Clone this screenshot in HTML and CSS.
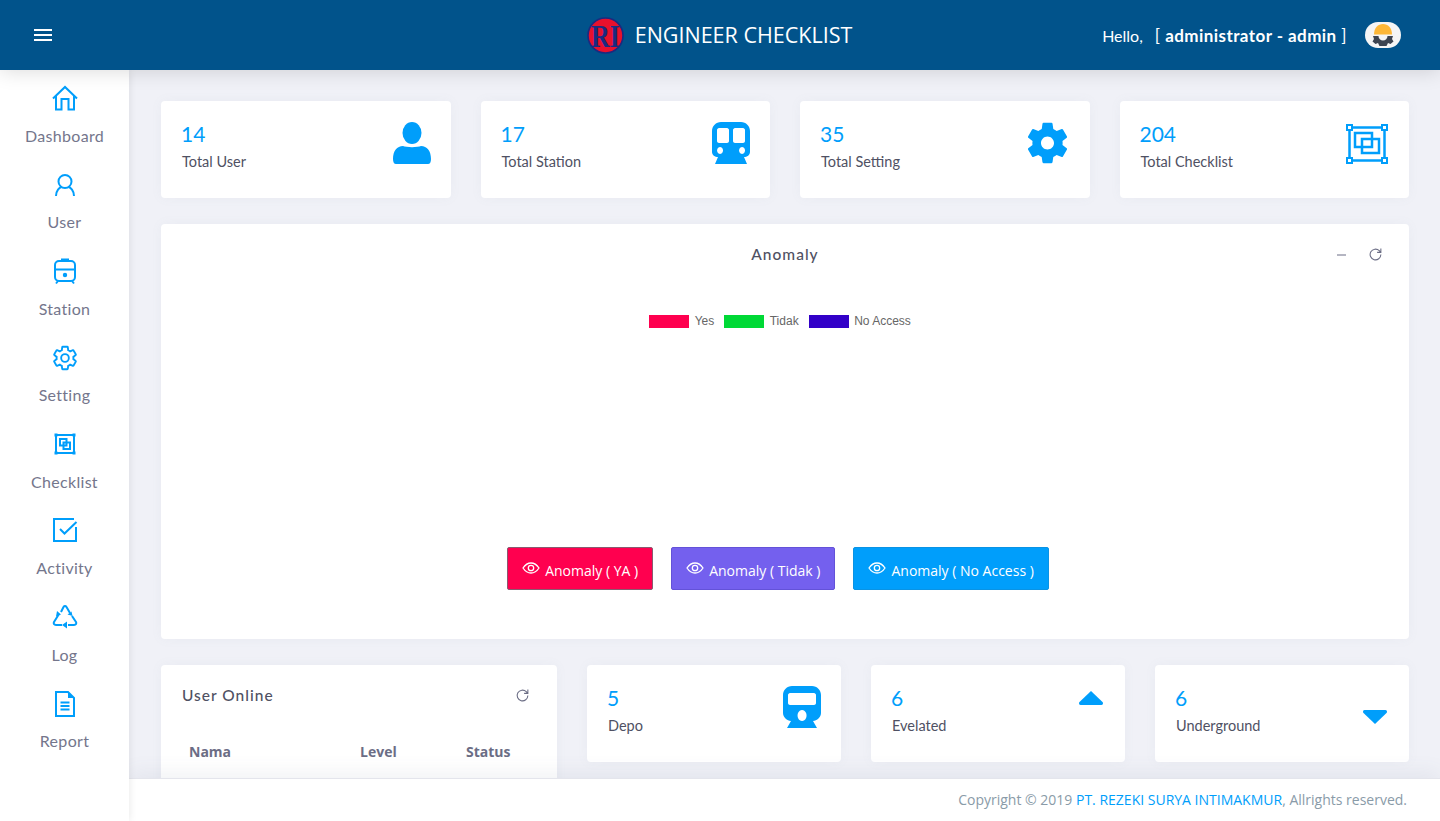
FILE: index.html
```html
<!DOCTYPE html>
<html>
<head>
    <title>Engineer Checklist</title>
    <link rel="stylesheet" href="styles.css">
</head>
<body>
    <header class="topbar">
        <div class="topbar-left">
            <svg class="burger" width="18" height="12" viewBox="0 0 18 12"><path d="M0 1H18M0 6H18M0 11H18" stroke="#fff" stroke-width="2"/></svg>
        </div>
        <div class="brand">
            <svg class="brand-logo" width="37" height="37" viewBox="0 0 37 37">
                <circle cx="18.500" cy="18.500" r="17.500" fill="#e8112d" stroke="#1b2a80" stroke-width="1.600"/>
                <text x="18.500" y="29.500" text-anchor="middle" textLength="29" lengthAdjust="spacingAndGlyphs" class="brand-letters">RI</text>
            </svg>
            <span class="brand-name">ENGINEER CHECKLIST</span>
        </div>
        <div class="topbar-user">
            <span class="hello">Hello,</span>
            <span class="who">[ <b>administrator - admin</b> ]</span>
            <span class="avatar">
                <svg width="24" height="26" viewBox="0 0 24 26">
                    <path d="M3 12.500C3 6 7 2 12 2s9 4 9 10.500z" fill="#fdb737"/>
                    <path d="M2 14H7.500A4.500 4.500 0 0 0 16.500 14H22L21 17l1.500 2.500L19.500 22 17 21l-1.500 3h-7L7 21l-2.500 1-3-2.500L3 17z" fill="#3d4450"/>
                </svg>
            </span>
        </div>
    </header>

    <div class="shell">
        <nav class="sidebar">
            <a class="nav-item">
                <svg class="nav-icon" width="28" height="28" viewBox="0 0 28 28"><path d="M2 14.500L14 3l12 11.500M5 12v13.500h5.500V15h7v10.500H23V12"/></svg>
                <span>Dashboard</span>
            </a>
            <a class="nav-item">
                <svg class="nav-icon" width="28" height="28" viewBox="0 0 28 28"><circle cx="14" cy="10.500" r="6.500"/><path d="M5 25c0-5.500 3.500-8.500 5.500-9M23 25c0-5.500-3.500-8.500-5.500-9"/></svg>
                <span>User</span>
            </a>
            <a class="nav-item">
                <svg class="nav-icon" width="28" height="28" viewBox="0 0 28 28"><rect x="4" y="4" width="20" height="20" rx="4"/><path d="M4 12.500h20M11 4V2.500h6V4M7 24l-2 2.500M21 24l2 2.500"/><circle cx="14" cy="18" r="1.200" fill="#009efb"/></svg>
                <span>Station</span>
            </a>
            <a class="nav-item">
                <svg class="nav-icon" width="28" height="28" viewBox="0 0 24 24"><path stroke-width="1.600" d="M19.140 12.940c.04-.3.06-.61.06-.94 0-.32-.02-.64-.07-.94l2.030-1.580c.18-.14.23-.41.12-.61l-1.920-3.320c-.12-.22-.37-.29-.59-.22l-2.390.96c-.5-.38-1.030-.7-1.620-.94l-.36-2.540c-.04-.24-.24-.41-.48-.41h-3.840c-.24 0-.43.17-.47.41l-.36 2.540c-.59.24-1.130.57-1.620.94l-2.390-.96c-.22-.08-.47 0-.59.22L2.740 8.870c-.12.21-.08.47.12.61l2.030 1.580c-.05.3-.09.63-.09.94s.02.64.07.94l-2.030 1.580c-.18.14-.23.41-.12.61l1.920 3.320c.12.22.37.29.59.22l2.390-.96c.5.38 1.030.7 1.620.94l.36 2.540c.05.24.24.41.48.41h3.840c.24 0 .44-.17.47-.41l.36-2.540c.59-.24 1.130-.56 1.620-.94l2.390.96c.22.08.47 0 .59-.22l1.920-3.320c.12-.22.07-.47-.12-.61l-2.010-1.580z"/><circle cx="12" cy="12" r="3.300" stroke-width="1.600"/></svg>
                <span>Setting</span>
            </a>
            <a class="nav-item">
                <svg class="nav-icon" width="28" height="28" viewBox="0 0 28 28"><rect x="5" y="5" width="18" height="18"/><rect x="9" y="9" width="6.500" height="6.500"/><rect x="12.500" y="12.500" width="6.500" height="6.500"/><path class="fill" d="M3.500 3.500h3v3h-3zM21.500 3.500h3v3h-3zM3.500 21.500h3v3h-3zM21.500 21.500h3v3h-3z"/></svg>
                <span>Checklist</span>
            </a>
            <a class="nav-item">
                <svg class="nav-icon nudge" width="28" height="28" viewBox="0 0 28 28"><path d="M25 11v14H3V3h20"/><path d="M9 13l4.500 4.500L25.500 6"/></svg>
                <span>Activity</span>
            </a>
            <a class="nav-item">
                <svg class="nav-icon" width="28" height="28" viewBox="0 0 28 28"><path d="M10 9l2.500-5c.8-1.300 2.200-1.300 3 0l3.500 6M8 11l-5 8c-.8 1.500 0 3 2 3h6M21 13l4 6c.8 1.500 0 3-2 3h-6"/><path class="fill" d="M21.500 13l-5-1.500 4-3zM5 13.500l1-5.500 4 3.500zM16 18.500v7l-5-3.500z"/></svg>
                <span>Log</span>
            </a>
            <a class="nav-item">
                <svg class="nav-icon" width="28" height="28" viewBox="0 0 28 28"><path d="M5 2h12l6 6v18H5z"/><path d="M9.500 12.500h9M9.500 16h9M9.500 19.500h9"/><path class="fill" d="M17 2l6 6h-6z"/></svg>
                <span>Report</span>
            </a>
        </nav>

        <div class="page">
            <main class="content">
                <section class="row row-four">
                    <div class="stat-card">
                        <div><div class="stat-num">14</div><div class="stat-label">Total User</div></div>
                        <svg class="stat-icon" width="38" height="42" viewBox="0 0 38 42"><ellipse cx="19" cy="11" rx="9.500" ry="11"/><path d="M0 37c0-8 4-13 10-13 3 1.500 15 1.500 18 0 6 0 10 5 10 13 0 3-1 5-3 5H3c-2 0-3-2-3-5z"/></svg>
                    </div>
                    <div class="stat-card">
                        <div><div class="stat-num">17</div><div class="stat-label">Total Station</div></div>
                        <svg class="stat-icon" width="38" height="42" viewBox="0 0 38 42"><path fill-rule="evenodd" d="M9 0h20c5 0 9 4 9 9v21c0 3-3 5-6 5l3 7H3l3-7c-3 0-6-2-6-5V9c0-5 4-9 9-9zM5 8v11c0 1 1 2 2 2h8c1 0 2-1 2-2V8c0-1-1-2-2-2H7c-1 0-2 1-2 2zm16 0v11c0 1 1 2 2 2h8c1 0 2-1 2-2V8c0-1-1-2-2-2h-8c-1 0-2 1-2 2zM8 25a3 3.500 0 1 0 .1 0zm22 0a3 3.500 0 1 0 .1 0z"/></svg>
                    </div>
                    <div class="stat-card">
                        <div><div class="stat-num">35</div><div class="stat-label">Total Setting</div></div>
                        <svg class="stat-icon icon-gear" width="41" height="42" viewBox="2.600 2 18.800 20"><path d="M19.140 12.940c.04-.3.06-.61.06-.94 0-.32-.02-.64-.07-.94l2.030-1.580c.18-.14.23-.41.12-.61l-1.920-3.320c-.12-.22-.37-.29-.59-.22l-2.390.96c-.5-.38-1.030-.7-1.620-.94l-.36-2.540c-.04-.24-.24-.41-.48-.41h-3.840c-.24 0-.43.17-.47.41l-.36 2.540c-.59.24-1.130.57-1.620.94l-2.390-.96c-.22-.08-.47 0-.59.22L2.740 8.870c-.12.21-.08.47.12.61l2.030 1.580c-.05.3-.09.63-.09.94s.02.64.07.94l-2.030 1.580c-.18.14-.23.41-.12.61l1.920 3.320c.12.22.37.29.59.22l2.390-.96c.5.38 1.030.7 1.620.94l.36 2.540c.05.24.24.41.48.41h3.840c.24 0 .44-.17.47-.41l.36-2.540c.59-.24 1.130-.56 1.620-.94l2.390.96c.22.08.47 0 .59-.22l1.920-3.320c.12-.22.07-.47-.12-.61l-2.010-1.580zM12 15.100c-1.700 0-3.100-1.400-3.100-3.100s1.400-3.100 3.100-3.100 3.100 1.400 3.100 3.100-1.400 3.100-3.100 3.100z"/></svg>
                    </div>
                    <div class="stat-card">
                        <div><div class="stat-num">204</div><div class="stat-label">Total Checklist</div></div>
                        <svg class="stat-icon icon-frame" width="42" height="40" viewBox="0 0 42 40"><rect x="3.500" y="3.500" width="35" height="33"/><rect x="9" y="9" width="17" height="14"/><rect x="16" y="15" width="17" height="14"/><path class="corner" d="M1 1h5v5H1zM36 1h5v5h-5zM1 34h5v5H1zM36 34h5v5h-5z"/></svg>
                    </div>
                </section>

                <section class="chart-card">
                    <div class="chart-head">
                        <h4 class="card-title">Anomaly</h4>
                        <div class="card-tools">
                            <svg width="12" height="12" viewBox="0 0 12 12"><path d="M1 7h9" class="tool-line"/></svg>
                            <svg width="15" height="15" viewBox="0 0 14 14"><path d="M12 7a5 5 0 1 1-1.500-3.600L12 5M12 1.500V5H8.500" class="tool-line"/></svg>
                        </div>
                    </div>
                    <div class="legend">
                        <span class="legend-item"><i class="swatch swatch-yes"></i>Yes</span>
                        <span class="legend-item"><i class="swatch swatch-no"></i>Tidak</span>
                        <span class="legend-item"><i class="swatch swatch-na"></i>No Access</span>
                    </div>
                    <div class="chart-actions">
                        <a class="btn btn-yes"><svg class="eye" width="18" height="12" viewBox="0 0 18 12"><path d="M1 6c2-3 5-5 8-5s6 2 8 5c-2 3-5 5-8 5s-6-2-8-5z"/><circle cx="9" cy="6" r="2.700"/></svg>Anomaly ( YA )</a>
                        <a class="btn btn-no"><svg class="eye" width="18" height="12" viewBox="0 0 18 12"><path d="M1 6c2-3 5-5 8-5s6 2 8 5c-2 3-5 5-8 5s-6-2-8-5z"/><circle cx="9" cy="6" r="2.700"/></svg>Anomaly ( Tidak )</a>
                        <a class="btn btn-na"><svg class="eye" width="18" height="12" viewBox="0 0 18 12"><path d="M1 6c2-3 5-5 8-5s6 2 8 5c-2 3-5 5-8 5s-6-2-8-5z"/><circle cx="9" cy="6" r="2.700"/></svg>Anomaly ( No Access )</a>
                    </div>
                </section>

                <section class="row row-bottom">
                    <div class="online-card">
                        <div class="online-head">
                            <h4 class="card-title">User Online</h4>
                            <svg width="15" height="15" viewBox="0 0 14 14"><path d="M12 7a5 5 0 1 1-1.500-3.600L12 5M12 1.500V5H8.500" class="tool-line"/></svg>
                        </div>
                        <table class="online-table">
                            <thead>
                                <tr><th class="col-name">Nama</th><th class="col-level">Level</th><th>Status</th></tr>
                            </thead>
                        </table>
                    </div>
                    <div class="stat-card">
                        <div><div class="stat-num">5</div><div class="stat-label">Depo</div></div>
                        <svg class="stat-icon" width="38" height="42" viewBox="0 0 38 42"><path fill-rule="evenodd" d="M9 0h20c5 0 9 4 9 9v18c0 4-4 8-8 8l4 7H4l4-7c-4 0-8-4-8-8V9c0-5 4-9 9-9zM5 9v8c0 1 1 2 2 2h24c1 0 2-1 2-2V9c0-1-1-2-2-2H7c-1 0-2 1-2 2zm14 15a4.500 5.500 0 1 0 .1 0z"/></svg>
                    </div>
                    <div class="stat-card">
                        <div><div class="stat-num">6</div><div class="stat-label">Evelated</div></div>
                        <svg class="stat-icon arrow-up" width="24" height="14" viewBox="0 0 24 14"><path d="M12 0l11.500 11c1 1 .4 3-1 3H1.500c-1.400 0-2-2-1-3z"/></svg>
                    </div>
                    <div class="stat-card">
                        <div><div class="stat-num">6</div><div class="stat-label">Underground</div></div>
                        <svg class="stat-icon arrow-down" width="24" height="14" viewBox="0 0 24 14"><path d="M12 14L.5 3C-.5 2 .1 0 1.500 0h21c1.400 0 2 2 1 3z"/></svg>
                    </div>
                </section>
            </main>
            <footer class="footer">Copyright © 2019&nbsp;<a class="footer-link">PT. REZEKI SURYA INTIMAKMUR</a>, Allrights reserved.</footer>
        </div>
    </div>
</body>
</html>
```

FILE: styles.css
```css
* {
    box-sizing: border-box;
}

body {
    margin: 0;
    height: 100vh;
    overflow: hidden;
    display: flex;
    flex-direction: column;
    font-family: Lato, "Open Sans", sans-serif;
    background-color: #f0f1f7;
    color: #4f5163;
}

.topbar {
    height: 70px;
    flex: none;
    display: grid;
    grid-template-columns: 1fr auto 1fr;
    align-items: center;
    padding: 0 39px 0 34px;
    background-color: #01538b;
    color: #fff;
    position: relative;
    z-index: 3;
    box-shadow: 0 0 20px rgba(0, 0, 0, 0.16);
}

.burger {
    display: block;
}

.brand {
    display: flex;
    align-items: center;
    gap: 11px;
    margin-left: 4px;
}

.brand-logo {
    display: block;
}

.brand-letters {
    font-family: "Liberation Serif", serif;
    font-weight: bold;
    font-size: 31px;
    fill: #1b2a80;
}

.brand-name {
    font-family: "Open Sans", sans-serif;
    font-size: 21.5px;
    line-height: 1;
}

.topbar-user {
    display: flex;
    justify-content: flex-end;
    align-items: center;
    font-size: 16px;
}

.hello {
    margin-right: 12px;
}

.who {
    font-size: 17px;
    letter-spacing: 0.43px;
}

.who b {
    font-weight: 700;
}

.avatar {
    width: 36px;
    height: 26px;
    margin-left: 18px;
    border-radius: 13px;
    background-color: #f5f5f5;
    display: flex;
    align-items: center;
    justify-content: center;
}

.avatar svg {
    display: block;
}

.shell {
    flex: 1;
    min-height: 0;
    display: flex;
}

.sidebar {
    width: 129px;
    flex: none;
    padding-top: 14px;
    background-color: #fff;
    position: relative;
    z-index: 2;
    box-shadow: 0 0 8px rgba(0, 0, 0, 0.1);
}

.nav-item {
    height: 86.5px;
    display: flex;
    flex-direction: column;
    align-items: center;
    font-size: 16px;
    line-height: 20px;
    letter-spacing: 0.3px;
    color: #74768c;
}

.nav-item span {
    margin-top: 13.5px;
}

.nav-icon {
    display: block;
    flex: none;
    fill: none;
    stroke: #009efb;
    stroke-width: 2;
}

.nav-icon .fill {
    fill: #009efb;
    stroke: none;
}

.nudge {
    margin-top: -1px;
    margin-bottom: 1px;
}

.page {
    flex: 1;
    min-width: 0;
    display: flex;
    flex-direction: column;
}

.content {
    flex: 1;
    min-height: 0;
    overflow: hidden;
    padding: 31px 31px 0 32px;
}

.row {
    display: flex;
    gap: 30px;
}

.row-four .stat-card {
    flex: 1;
}

.row-bottom {
    align-items: flex-start;
}

.row-bottom .stat-card {
    width: 254px;
    flex: none;
}

.stat-card {
    height: 97px;
    padding: 20px 20px 0;
    display: flex;
    justify-content: space-between;
    align-items: flex-start;
    background-color: #fff;
    border-radius: 4px;
    box-shadow: 0 0 12px rgba(120, 130, 160, 0.06);
}

.row-four .stat-icon,
.row-bottom .stat-icon {
    margin-top: 1px;
}

.stat-num {
    font-size: 21px;
    line-height: 26px;
    color: #009efb;
}

.stat-label {
    margin-top: 5px;
    padding-left: 1px;
    font-size: 14.5px;
    line-height: 20px;
    color: #4f5163;
}

.stat-icon {
    display: block;
    fill: #009efb;
}

.row-four .icon-gear {
    margin-right: 2px;
}

.row-four .icon-frame {
    fill: none;
    stroke: #009efb;
    stroke-width: 2.500;
    margin: 3px 1px 0 0;
}

.icon-frame .corner {
    fill: #fff;
    stroke-width: 2;
}

.row-bottom .arrow-up {
    margin: 6px 2px 0 0;
}

.row-bottom .arrow-down {
    margin: 25px 2px 0 0;
}

.chart-card {
    height: 415px;
    margin: 26px 0;
    padding: 19px 20px 49px;
    display: flex;
    flex-direction: column;
    background-color: #fff;
    border-radius: 4px;
    box-shadow: 0 0 12px rgba(120, 130, 160, 0.06);
}

.chart-head {
    display: grid;
    grid-template-columns: 1fr auto 1fr;
    align-items: center;
}

.card-title {
    grid-column: 2;
    margin: 0;
    font-size: 15.5px;
    font-weight: 500;
    line-height: 22px;
    letter-spacing: 1px;
    color: #4f5163;
}

.card-tools {
    grid-column: 3;
    display: flex;
    justify-content: flex-end;
    align-items: center;
    gap: 20px;
    padding-right: 6px;
}

.card-tools svg,
.online-head svg {
    display: block;
}

.tool-line {
    fill: none;
    stroke: #6b6d85;
    stroke-width: 1;
}

.legend {
    margin-top: 50px;
    padding-right: 10px;
    display: flex;
    justify-content: center;
    gap: 10px;
    font-family: "Liberation Sans", sans-serif;
    font-size: 12px;
    line-height: 13px;
    color: #666;
}

.legend-item {
    display: flex;
    align-items: center;
}

.swatch {
    width: 40px;
    height: 13px;
    margin-right: 5.5px;
}

.swatch-yes {
    background-color: #ff004f;
}

.swatch-no {
    background-color: #00d936;
}

.swatch-na {
    background-color: #3200c8;
}

.chart-actions {
    margin-top: auto;
    padding-right: 14px;
    display: flex;
    justify-content: center;
    gap: 18px;
}

.btn {
    height: 43px;
    padding: 4px 14px 0;
    display: flex;
    align-items: center;
    gap: 5px;
    font-family: "Open Sans", sans-serif;
    font-size: 14px;
    color: #fff;
    border-radius: 2px;
    border: 1px solid;
}

.eye {
    fill: none;
    stroke: #fff;
    stroke-width: 1.300;
    margin-top: -6px;
}

.btn-yes {
    background-color: #ff004f;
    border-color: #8a5a70;
}

.btn-no {
    background-color: #7460ee;
    border-color: #6352d8;
}

.btn-na {
    background-color: #009efb;
    border-color: #0a93e4;
}

.online-card {
    width: 396px;
    flex: none;
    height: 160px;
    padding: 19px 21px;
    background-color: #fff;
    border-radius: 4px;
    box-shadow: 0 0 12px rgba(120, 130, 160, 0.06);
}

.online-head {
    display: flex;
    justify-content: space-between;
    align-items: center;
    padding-right: 6px;
}

.online-table {
    width: 100%;
    margin-top: 36px;
    border-collapse: collapse;
    font-family: "Open Sans", sans-serif;
}

.online-table th {
    padding: 0;
    font-size: 14px;
    line-height: 20px;
    text-align: left;
    color: #6b6d85;
}

.online-table .col-name {
    width: 178px;
    padding-left: 7px;
}

.col-level {
    width: 106px;
}

.footer {
    height: 43px;
    flex: none;
    padding: 0 33px 2px 0;
    display: flex;
    justify-content: flex-end;
    align-items: center;
    font-family: "Open Sans", sans-serif;
    font-size: 14px;
    color: #8a9ba8;
    background-color: #fff;
    border-top: 1px solid #e4e5ec;
    position: relative;
    box-shadow: 0 -6px 20px rgba(90, 100, 130, 0.08);
}

.footer-link {
    color: #009efb;
}
```
